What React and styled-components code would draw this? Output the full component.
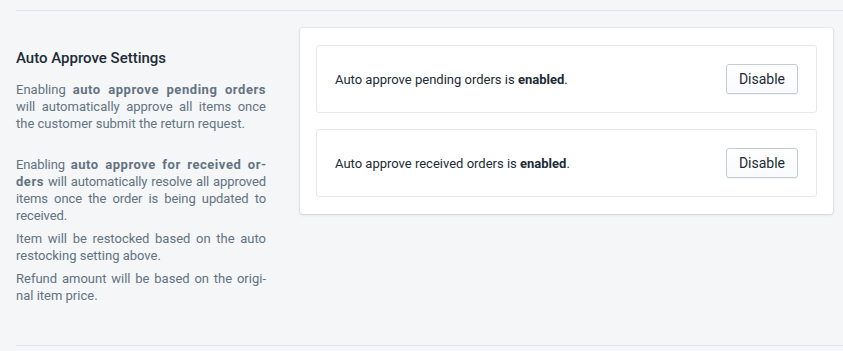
import React from 'react'
import styled, { createGlobalStyle } from 'styled-components'

const GlobalStyle = createGlobalStyle`
  html, body {
    margin: 0;
    padding: 0;
    background: #f4f6f8;
  }
  body {
    font-family: Roboto, 'Noto Sans', sans-serif;
    -webkit-font-smoothing: antialiased;
  }
`

export default function App() {
  return (
    <React.Fragment>
      <GlobalStyle />
      <Page>
        <Divider />
        <Section>
          <Annotation>
            <Heading>Auto Approve Settings</Heading>
            <Description>
              <Paragraph spaced>
                Enabling <Strong>auto approve pending orders</Strong> will automatically approve all items once the customer submit the return request.
              </Paragraph>
              <Paragraph tight>
                Enabling <Strong>auto approve for received or{'\u00AD'}ders</Strong> will automatically resolve all approved items once the order is being updated to received.
              </Paragraph>
              <Paragraph>
                Item will be restocked based on the auto restocking setting above.
              </Paragraph>
              <Paragraph>
                Refund amount will be based on the origi{'\u00AD'}nal item price.
              </Paragraph>
            </Description>
          </Annotation>
          <Card>
            <SettingRow>
              <SettingText>Auto approve pending orders is <b>enabled</b>.</SettingText>
              <Button>Disable</Button>
            </SettingRow>
            <SettingRow>
              <SettingText>Auto approve received orders is <b>enabled</b>.</SettingText>
              <Button>Disable</Button>
            </SettingRow>
          </Card>
        </Section>
        <Divider />
      </Page>
    </React.Fragment>
  )
}

const Page = styled.div`
  padding: 10px 0 0 16px;
  height: 351px;
  box-sizing: border-box;
`
const Divider = styled.div`
  height: 1px;
  background: #dfe3e8;
`
const Section = styled.div`
  display: grid;
  grid-template-columns: 250px 1fr;
  column-gap: 34px;
  align-items: start;
  padding: 17px 10px 0 0;
  height: 334px;
  box-sizing: border-box;
`
const Annotation = styled.div`
  padding-top: 20px;
`
const Heading = styled.h2`
  margin: 0;
  font-size: 15px;
  line-height: 20px;
  font-weight: 500;
  color: #212b36;
`
const Description = styled.div`
  margin-top: 13px;
  color: #637381;
  font-size: 13px;
  line-height: 17px;
  text-align: justify;
`
const Paragraph = styled.p`
  margin: 0 0 ${p => (p.spaced ? '24px' : '6px')};
  letter-spacing: ${p => (p.tight ? '-0.1px' : '0')};
`
const Strong = styled.strong`
  font-weight: 700;
  letter-spacing: 0.55px;
`
const Card = styled.div`
  background: #fff;
  border-radius: 3px;
  box-shadow: 0 0 0 1px rgba(63, 63, 68, 0.05), 0 1px 3px 0 rgba(63, 63, 68, 0.15);
  padding: 17px 16px;
  display: flex;
  flex-direction: column;
  gap: 16px;
`
const SettingRow = styled.div`
  display: flex;
  align-items: center;
  justify-content: space-between;
  border: 1px solid #e6e9ec;
  border-radius: 3px;
  padding: 18px;
`
const SettingText = styled.span`
  font-size: 13px;
  color: #212b36;
  b {
    font-weight: 700;
  }
`
const Button = styled.button`
  height: 30px;
  padding: 0 12px;
  font-family: inherit;
  font-size: 14px;
  color: #212b36;
  background: linear-gradient(180deg, #fff, #f9fafb);
  border: 1px solid #c4cdd5;
  border-radius: 3px;
  box-shadow: 0 1px 0 0 rgba(22, 29, 37, 0.05);
  cursor: pointer;
`
